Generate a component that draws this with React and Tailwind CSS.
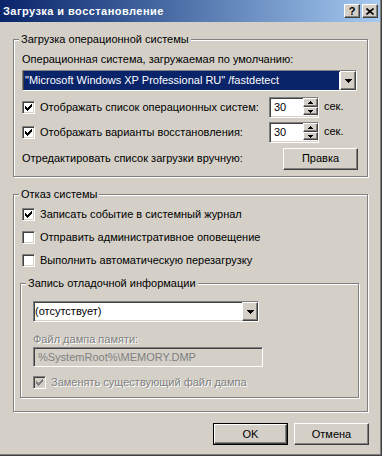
import React from 'react';

const raised =
  'bg-[#d4d0c8] border border-t-white border-l-white border-r-[#404040] border-b-[#404040] shadow-[inset_-1px_-1px_0_#808080]';
const sunken =
  'border border-t-[#808080] border-l-[#808080] border-r-white border-b-white shadow-[inset_1px_1px_0_#404040,inset_-1px_-1px_0_#d4d0c8]';

function CheckMark({ color = '#000' }) {
  const cols = [2, 3, 4, 3, 2, 1, 0];
  return (
    <svg width="7" height="7" viewBox="0 0 7 7" shapeRendering="crispEdges">
      {cols.map((y, x) => (
        <rect key={x} x={x} y={y} width="1" height="3" fill={color} />
      ))}
    </svg>
  );
}

function Checkbox({ checked, disabled }) {
  return (
    <div
      className={`w-[13px] h-[13px] shrink-0 flex items-center justify-center ${sunken} ${
        disabled ? 'bg-[#d4d0c8]' : 'bg-white'
      }`}
    >
      {checked && <CheckMark color={disabled ? '#808080' : '#000'} />}
    </div>
  );
}

function DownArrow() {
  return (
    <svg width="7" height="4" viewBox="0 0 7 4" shapeRendering="crispEdges">
      <rect x="0" y="0" width="7" height="1" fill="#000" />
      <rect x="1" y="1" width="5" height="1" fill="#000" />
      <rect x="2" y="2" width="3" height="1" fill="#000" />
      <rect x="3" y="3" width="1" height="1" fill="#000" />
    </svg>
  );
}

function SmallArrow({ up }) {
  return (
    <svg width="5" height="3" viewBox="0 0 5 3" shapeRendering="crispEdges">
      {up ? (
        <>
          <rect x="2" y="0" width="1" height="1" fill="#000" />
          <rect x="1" y="1" width="3" height="1" fill="#000" />
          <rect x="0" y="2" width="5" height="1" fill="#000" />
        </>
      ) : (
        <>
          <rect x="0" y="0" width="5" height="1" fill="#000" />
          <rect x="1" y="1" width="3" height="1" fill="#000" />
          <rect x="2" y="2" width="1" height="1" fill="#000" />
        </>
      )}
    </svg>
  );
}

function Combo({ text, selected, className }) {
  return (
    <div className={`h-[21px] bg-white flex ${sunken} ${className}`}>
      <div className="flex-1 flex items-center pl-[1px] overflow-hidden">
        {selected ? (
          <div className="h-full w-full bg-[#0a246a] text-white flex items-center pl-[1px] whitespace-nowrap">
            {text}
          </div>
        ) : (
          <span className="whitespace-nowrap">{text}</span>
        )}
      </div>
      <div className={`w-[16px] h-full ml-[1px] flex items-center justify-center ${raised}`}>
        <DownArrow />
      </div>
    </div>
  );
}

function Spin({ value }) {
  return (
    <div className={`w-[50px] h-[21px] bg-white flex ${sunken}`}>
      <div className="flex-1 flex items-center pl-[4px]">{value}</div>
      <div className="w-[15px] flex flex-col">
        <div className={`h-[9px] flex items-center justify-center ${raised}`}>
          <SmallArrow up />
        </div>
        <div className={`h-[8px] flex items-center justify-center ${raised}`}>
          <SmallArrow />
        </div>
      </div>
    </div>
  );
}

function Group({ title, className = '', children }) {
  return (
    <div className={`border border-[#808080] shadow-[1px_1px_0_#fff,inset_1px_1px_0_#fff] ${className}`}>
      <div className="-mt-[7px] ml-[5px] w-fit px-[2px] bg-[#d4d0c8] h-[13px] leading-[13px] whitespace-nowrap">
        {title}
      </div>
      {children}
    </div>
  );
}

function CheckRow({ checked, disabled, label, className = '' }) {
  return (
    <div className={`h-[13px] flex items-center ${className}`}>
      <Checkbox checked={checked} disabled={disabled} />
      <span
        className={`ml-[5px] whitespace-nowrap ${
          disabled ? 'text-[#808080] [text-shadow:1px_1px_0_#fff]' : ''
        }`}
      >
        {label}
      </span>
    </div>
  );
}

function Button({ children, isDefault }) {
  const inner = (
    <div className={`w-full h-full flex items-center justify-center ${raised}`}>{children}</div>
  );
  return (
    <div className={`w-[75px] h-[22px] ${isDefault ? 'border border-black' : ''}`}>{inner}</div>
  );
}

export default function App() {
  return (
    <div className="w-[382px] h-[456px] bg-[#d4d0c8] border-r border-b border-[#404040] text-[11px] leading-[13px] text-black font-['Liberation_Sans',Arial,sans-serif] overflow-hidden">
      <div className="h-full border-r border-b border-[#808080] flex flex-col">
        {/* title bar */}
        <div className="h-[22px] shrink-0 bg-linear-to-r from-[#0a246a] to-[#a6caf0] flex items-center pl-[3px] pr-[2px]">
          <span className="text-white font-bold tracking-[0.45px] whitespace-nowrap">Загрузка и восстановление</span>
          <div className="ml-auto flex gap-[2px]">
            <div className={`w-[16px] h-[14px] flex items-center justify-center font-bold text-[11px] leading-none ${raised}`}>
              ?
            </div>
            <div className={`w-[16px] h-[14px] flex items-center justify-center ${raised}`}>
              <svg width="8" height="7" viewBox="0 0 8 7">
                <path d="M0.5 0.5 L7.5 6.5 M7.5 0.5 L0.5 6.5" stroke="#000" strokeWidth="1.6" />
              </svg>
            </div>
          </div>
        </div>

        <div className="pl-[13px]">
          <Group title="Загрузка операционной системы" className="mt-[17px] w-[355px] pb-[7px]">
            <div className="mt-[7px] pl-[8px] whitespace-nowrap">
              Операционная система, загружаемая по умолчанию:
            </div>
            <Combo
              selected
              className="mt-[4px] ml-[8px] w-[335px]"
              text={'"Microsoft Windows XP Professional RU" /fastdetect'}
            />
            <div className="mt-[6px] h-[21px] flex items-center pl-[8px]">
              <div className="w-[247px]">
                <CheckRow checked label="Отображать список операционных систем:" />
              </div>
              <Spin value="30" />
              <span className="ml-[5px] -mt-[3px]">сек.</span>
            </div>
            <div className="mt-[4px] h-[21px] flex items-center pl-[8px]">
              <div className="w-[247px]">
                <CheckRow checked label="Отображать варианты восстановления:" />
              </div>
              <Spin value="30" />
              <span className="ml-[5px] -mt-[3px]">сек.</span>
            </div>
            <div className="mt-[5px] h-[21px] flex items-center pl-[8px]">
              <div className="w-[261px] whitespace-nowrap">Отредактировать список загрузки вручную:</div>
              <Button>Правка</Button>
            </div>
          </Group>

          <Group title="Отказ системы" className="mt-[17px] w-[355px] pb-[13px]">
            <div className="pl-[8px]">
              <CheckRow checked label="Записать событие в системный журнал" className="mt-[7px]" />
              <CheckRow label="Отправить административное оповещение" className="mt-[10px]" />
              <CheckRow label="Выполнить автоматическую перезагрузку" className="mt-[10px]" />
            </div>
            <Group title="Запись отладочной информации" className="mt-[16px] ml-[6px] w-[339px] pb-[8px]">
              <div className="pl-[12px]">
                <Combo className="mt-[11px] w-[226px]" text="(отсутствует)" />
                <div className="mt-[11px] h-[13px] text-[#808080] [text-shadow:1px_1px_0_#fff] whitespace-nowrap">
                  Файл дампа памяти:
                </div>
                <div className={`mt-[1px] w-[230px] h-[20px] flex items-center pl-[4px] text-[#808080] ${sunken}`}>
                  %SystemRoot%\MEMORY.DMP
                </div>
                <CheckRow checked disabled label="Заменять существующий файл дампа" className="mt-[9px]" />
              </div>
            </Group>
          </Group>

          <div className="mt-[11px] w-[356px] flex justify-end gap-[6px]">
            <Button isDefault>OK</Button>
            <Button>Отмена</Button>
          </div>
        </div>
      </div>
    </div>
  );
}
